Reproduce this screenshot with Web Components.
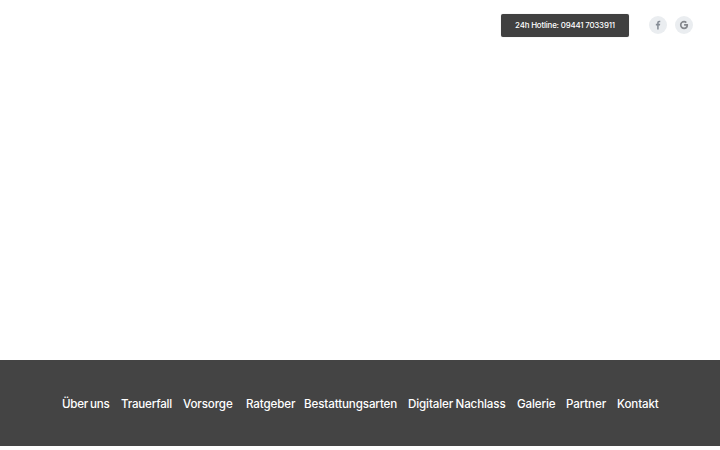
<!DOCTYPE html>
<html lang="de"><head><meta charset="utf-8"><title>Bestattungen</title>
<style>html,body{margin:0;padding:0;background:#fff}body{font-family:Inter,"Open Sans",sans-serif;width:720px;height:450px;overflow:hidden}</style>
</head><body>
<site-page>
  <site-header slot="header">
    <hotline-button>24h Hotline: 09441 7033911</hotline-button>
    <social-icon kind="f"></social-icon>
    <social-icon kind="g"></social-icon>
  </site-header>
  <site-nav slot="footer">
    <nav-link w="47" style="letter-spacing:-.3px">Über uns</nav-link>
    <nav-link w="51" style="margin-left:12px;letter-spacing:-.2px">Trauerfall</nav-link>
    <nav-link w="48" style="margin-left:11px">Vorsorge</nav-link>
    <nav-link w="49" style="margin-left:15px">Ratgeber</nav-link>
    <nav-link w="93" style="margin-left:9px">Bestattungsarten</nav-link>
    <nav-link w="98" style="margin-left:11px">Digitaler Nachlass</nav-link>
    <nav-link w="38" style="margin-left:11px">Galerie</nav-link>
    <nav-link w="40" style="margin-left:11px">Partner</nav-link>
    <nav-link w="41" style="margin-left:11px">Kontakt</nav-link>
  </site-nav>
</site-page>
<script>
function def(name, css, html, init){
  customElements.define(name, class extends HTMLElement{
    constructor(){super();this.attachShadow({mode:'open'}).innerHTML='<style>'+css+'</style>'+html;}
    connectedCallback(){ if(init) init(this); }
  });
}
def('site-page',':host{display:flex;flex-direction:column;width:720px;height:450px}.m{flex:1 0 auto;height:311px}.h{height:49px}.f{height:86px}.e{height:4px}',
 '<div class="h"><slot name="header"></slot></div><div class="m"></div><div class="f"><slot name="footer"></slot></div><div class="e"></div>');
def('site-header',':host{display:flex;justify-content:flex-end;align-items:flex-start;padding:14px 27px 0 0;box-sizing:border-box;height:49px}','<slot></slot>');
def('hotline-button',':host{display:flex;align-items:center;justify-content:center;box-sizing:border-box;width:128px;height:22.5px;padding-top:1px;margin-right:20px;background:#404040;color:#fff;border-radius:2px;font:500 7.9px/1 Inter,sans-serif;letter-spacing:-.18px;white-space:nowrap;box-shadow:0 0 1px rgba(0,0,0,.3)}','<slot></slot>');
const ICONS={
 f:'<svg viewBox="0 0 18 18" width="18" height="18"><path d="M9.7 13.4V9.4h1.3l.2-1.6H9.7V7c0-.45.13-.75.78-.75h.8V4.7c-.14-.02-.62-.06-1.17-.06-1.16 0-1.96.7-1.96 2V7.8H6.85v1.6h1.3v4z" fill="#868d96"/></svg>',
 g:'<svg viewBox="0 0 18 18" width="18" height="18"><path d="M13 8.1H9.1v1.55h2.2c-.2 1.05-1.1 1.75-2.2 1.75A2.55 2.55 0 0 1 6.5 9a2.55 2.55 0 0 1 2.6-2.45c.65 0 1.2.23 1.65.62l1.15-1.15A4.2 4.2 0 0 0 9.1 4.8a4.2 4.2 0 0 0 0 8.4c2.4 0 4-1.65 4-4.05 0-.37-.03-.7-.1-1.05z" fill="#85888d"/></svg>'};
def('social-icon',':host{display:block;width:18px;height:18px;margin:2px 0 0 8px;border-radius:50%;background:#eaedf0}:host(:first-of-type){margin-left:0}svg{display:block}','<span id="i"></span>',el=>{el.shadowRoot.getElementById('i').innerHTML=ICONS[el.getAttribute('kind')];});
def('site-nav',':host{display:flex;align-items:flex-start;box-sizing:border-box;height:86px;background:#444;padding:36px 0 0 62px}','<slot></slot>');
def('nav-link',':host{display:block;flex:none;color:#fff;font:500 11.6px/17px Inter,sans-serif;letter-spacing:-.12px;word-spacing:-.6px;white-space:nowrap}','<slot></slot>',el=>{el.style.width=el.getAttribute('w')+'px';});
</script>
</body></html>
